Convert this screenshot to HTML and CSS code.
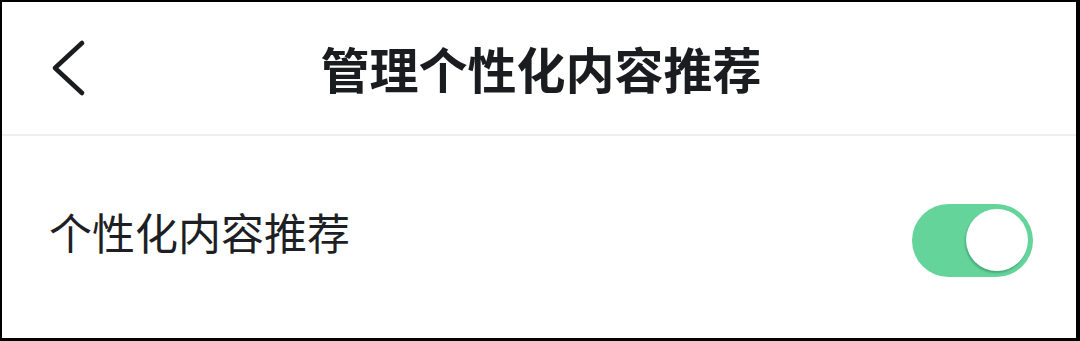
FILE: index.html
```html
<!DOCTYPE html>
<html lang="zh-CN">
<head>
<meta charset="utf-8">
<title>管理个性化内容推荐</title>
<link rel="stylesheet" href="styles.css">
</head>
<body>
<div class="frame">
  <header class="header">
    <div class="back">
      <svg width="36" height="60" viewBox="0 0 36 60" aria-hidden="true">
        <path d="M32 5 L5 30 L32 55" fill="none" stroke="#1b1c20" stroke-width="4.6" stroke-linecap="round" stroke-linejoin="round"/>
      </svg>
    </div>
    <h1 class="title">管理个性化内容推荐</h1>
    <div class="spacer"></div>
  </header>
  <div class="row">
    <span class="label">个性化内容推荐</span>
    <div class="switch"><div class="knob"></div></div>
  </div>
</div>
</body>
</html>
```
FILE: styles.css
```css
html, body {
  margin: 0;
  padding: 0;
  background: #000;
}
.frame {
  width: 1080px;
  height: 341px;
  box-sizing: border-box;
  border-style: solid;
  border-color: #000;
  border-width: 2px 4px 3px 2px;
  background: #fff;
  display: flex;
  flex-direction: column;
  font-family: "Noto Sans CJK SC", "Noto Sans", sans-serif;
}
.header {
  height: 132px;
  border-bottom: 2px solid #eeeeee;
  display: grid;
  grid-template-columns: 1fr auto 1fr;
  align-items: center;
}
.back {
  padding-left: 48px;
  display: flex;
  align-items: center;
}
.back svg {
  display: block;
}
.title {
  margin: 0;
  font-size: 49px;
  font-weight: 700;
  color: #1b1c20;
  line-height: 1;
  padding-left: 4px;
  margin-top: -2px;
}
.row {
  flex: 1;
  display: flex;
  align-items: center;
  justify-content: space-between;
  padding: 0 43px 0 47px;
}
.label {
  font-size: 43px;
  color: #1e1f24;
  line-height: 1;
  margin-top: -12px;
}
.switch {
  width: 121px;
  height: 73px;
  border-radius: 37px;
  background: #64d49b;
  box-sizing: border-box;
  padding: 0 5px;
  display: flex;
  align-items: center;
  justify-content: flex-end;
  margin-top: 6px;
}
.knob {
  width: 62px;
  height: 62px;
  border-radius: 50%;
  background: #fff;
  box-shadow: -1px 2px 2px rgba(40, 120, 80, 0.45);
}
```
